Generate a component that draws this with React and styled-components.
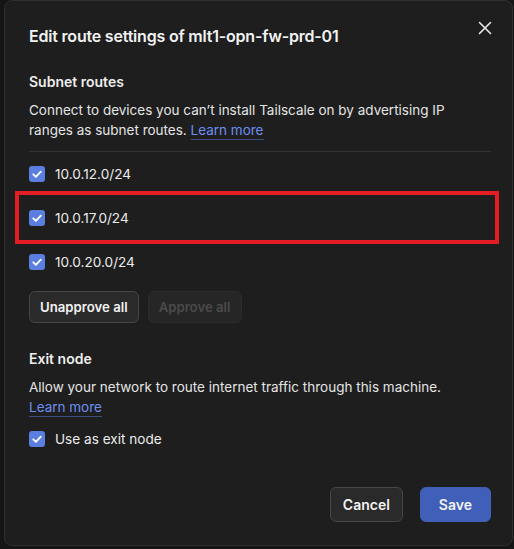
import styled, { createGlobalStyle } from 'styled-components';

const GlobalStyle = createGlobalStyle`
  html, body {
    margin: 0;
    padding: 0;
    background: #151515;
    font-family: Inter, "Noto Sans", sans-serif;
    color: #e6e6e6;
  }
  * { box-sizing: border-box; }
`;

const Page = styled.div`
  width: 514px;
  height: 549px;
  padding: 0 1px 3px 4px;
  overflow: hidden;
`;

const Dialog = styled.div`
  position: relative;
  height: 546px;
  background: #1e1e1e;
  border: 1px solid #2f2f2f;
  border-radius: 8px;
  padding: 23px 21px 0 24px;
  display: flex;
  flex-direction: column;
`;

const Title = styled.h1`
  margin: 0;
  font-size: 16px;
  line-height: 24px;
  font-weight: 600;
  color: #f2f2f2;
  letter-spacing: -0.2px;
`;

const CloseButton = styled.button`
  position: absolute;
  top: 16px;
  right: 16px;
  width: 22px;
  height: 22px;
  padding: 0;
  border: none;
  background: transparent;
  color: #eaeaea;
  display: flex;
  align-items: center;
  justify-content: center;
  cursor: pointer;
`;

const SectionHeading = styled.h2`
  margin: ${(p) => p.$top}px 0 0;
  font-size: 14px;
  line-height: 20px;
  font-weight: 600;
  color: #ededed;
`;

const Description = styled.p`
  margin: 8px 0 0;
  font-size: 13.5px;
  line-height: 20px;
  color: #e4e4e4;
`;

const Link = styled.a`
  color: #6d8ef0;
  text-decoration: none;
  border-bottom: 1px solid #3c4c7c;
  padding-bottom: 1px;
  cursor: pointer;
`;

const Divider = styled.hr`
  margin: 11px 0 0;
  border: none;
  border-top: 1px solid #323232;
`;

const RouteList = styled.div`
  display: flex;
  flex-direction: column;
`;

const CheckRow = styled.label`
  position: relative;
  display: flex;
  align-items: center;
  gap: 10px;
  height: 44px;
  font-size: 13.6px;
  color: #ececec;
  cursor: pointer;
`;

const Highlight = styled.span`
  position: absolute;
  left: -14px;
  right: -8px;
  top: -5px;
  bottom: -4px;
  border: 4px solid #e31d23;
  pointer-events: none;
`;

const Box = styled.span`
  width: 16px;
  height: 16px;
  border-radius: 3px;
  background: #5a7fe0;
  display: flex;
  align-items: center;
  justify-content: center;
  flex-shrink: 0;
`;

const ButtonRow = styled.div`
  display: flex;
  gap: 9px;
  margin-top: 7px;
`;

const Button = styled.button`
  height: ${(p) => p.$h}px;
  padding: 0 ${(p) => p.$px}px;
  border-radius: 6px;
  font-family: inherit;
  font-size: ${(p) => p.$fs}px;
  font-weight: 600;
  border: 1px solid ${(p) => (p.$primary ? '#3f5fb8' : p.disabled ? '#2c2c2c' : '#464646')};
  background: ${(p) => (p.$primary ? '#3f5fb8' : p.disabled ? '#262626' : '#2a2a2a')};
  color: ${(p) => (p.disabled ? '#4a4a4a' : '#f2f2f2')};
  cursor: ${(p) => (p.disabled ? 'default' : 'pointer')};
`;

const Footer = styled.div`
  display: flex;
  justify-content: flex-end;
  gap: 17px;
  margin-top: 26px;
`;

function Check({ label, highlight }) {
  return (
    <CheckRow>
      <Box>
        <svg width="12" height="12" viewBox="0 0 12 12" fill="none">
          <path d="M2.3 6.3 4.9 8.8 9.8 3.6" stroke="#fff" strokeWidth="1.8" strokeLinecap="round" strokeLinejoin="round" />
        </svg>
      </Box>
      {label}
      {highlight && <Highlight />}
    </CheckRow>
  );
}

const routes = [
  { cidr: '10.0.12.0/24' },
  { cidr: '10.0.17.0/24', highlight: true },
  { cidr: '10.0.20.0/24' },
];

export default function App() {
  return (
    <Page>
      <GlobalStyle />
      <Dialog>
        <Title>Edit route settings of mlt1-opn-fw-prd-01</Title>
        <CloseButton aria-label="Close">
          <svg width="14" height="14" viewBox="0 0 14 14" fill="none">
            <path d="M1.5 1.5 12.5 12.5M12.5 1.5 1.5 12.5" stroke="currentColor" strokeWidth="1.6" strokeLinecap="round" />
          </svg>
        </CloseButton>

        <SectionHeading $top={24}>Subnet routes</SectionHeading>
        <Description>
          Connect to devices you can’t install Tailscale on by advertising IP ranges as subnet routes.{' '}
          <Link>Learn more</Link>
        </Description>
        <Divider />
        <RouteList>
          {routes.map((r) => (
            <Check key={r.cidr} label={r.cidr} highlight={r.highlight} />
          ))}
        </RouteList>
        <ButtonRow>
          <Button $h={32} $px={10} $fs={13.2}>Unapprove all</Button>
          <Button $h={32} $px={10} $fs={13.2} disabled>Approve all</Button>
        </ButtonRow>

        <SectionHeading $top={26}>Exit node</SectionHeading>
        <Description>
          Allow your network to route internet traffic through this machine.
          <br />
          <Link>Learn more</Link>
        </Description>
        <Check label="Use as exit node" />

        <Footer>
          <Button $h={35} $px={12} $fs={14}>Cancel</Button>
          <Button $h={35} $px={18} $fs={14} $primary>Save</Button>
        </Footer>
      </Dialog>
    </Page>
  );
}
